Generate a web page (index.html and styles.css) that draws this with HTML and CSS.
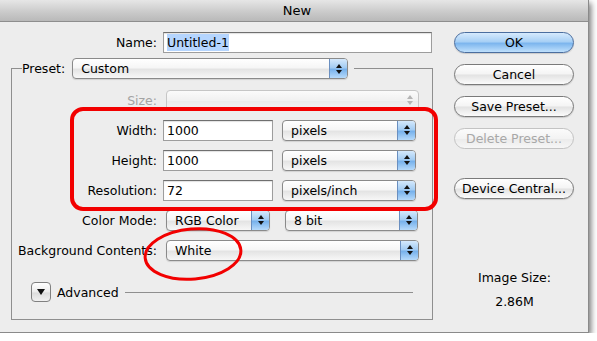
FILE: index.html
```html
<!DOCTYPE html>
<html>
<head>
<meta charset="utf-8">
<link rel="stylesheet" href="styles.css">
</head>
<body>
<div class="window">
  <div class="titlebar">New</div>
  <div class="content">
    <div class="main">
      <div class="name-row">
        <span class="lbl">Name:</span>
        <div class="field name-field"><span class="selected">Untitled-1</span></div>
      </div>
      <fieldset class="group">
        <legend class="legend">
          <span class="legend-inner">
            <span class="legend-label">Preset:</span>
            <span class="popup preset"><span class="ptext">Custom</span><span class="arrowbox"><span class="arrows"></span></span></span>
          </span>
        </legend>
        <div class="rows">
          <div class="row">
            <span class="lbl disabled">Size:</span>
            <span class="popup wide off"><span class="ptext"></span><span class="arrowbox"><span class="arrows"></span></span></span>
          </div>
          <div class="row">
            <span class="lbl">Width:</span>
            <div class="field num">1000</div>
            <span class="popup unit"><span class="ptext">pixels</span><span class="arrowbox"><span class="arrows"></span></span></span>
          </div>
          <div class="row">
            <span class="lbl">Height:</span>
            <div class="field num">1000</div>
            <span class="popup unit"><span class="ptext">pixels</span><span class="arrowbox"><span class="arrows"></span></span></span>
          </div>
          <div class="row">
            <span class="lbl">Resolution:</span>
            <div class="field num">72</div>
            <span class="popup unit"><span class="ptext">pixels/inch</span><span class="arrowbox"><span class="arrows"></span></span></span>
          </div>
          <div class="row">
            <span class="lbl">Color Mode:</span>
            <span class="popup mode"><span class="ptext">RGB Color</span><span class="arrowbox"><span class="arrows"></span></span></span>
            <span class="popup bits"><span class="ptext">8 bit</span><span class="arrowbox"><span class="arrows"></span></span></span>
          </div>
          <div class="row">
            <span class="lbl">Background Contents:</span>
            <span class="popup wide"><span class="ptext">White</span><span class="arrowbox"><span class="arrows"></span></span></span>
          </div>
          <div class="adv-row">
            <span class="disclosure"><span class="tri-down"></span></span>
            <span class="adv-text">Advanced</span>
            <span class="adv-line"></span>
          </div>
        </div>
      </fieldset>
    </div>
    <div class="side">
      <div class="btn ok">OK</div>
      <div class="btn">Cancel</div>
      <div class="btn">Save Preset...</div>
      <div class="btn dim">Delete Preset...</div>
      <div class="btn device">Device Central...</div>
      <div class="imgsize">
        <div>Image Size:</div>
        <div class="imgsize-val">2.86M</div>
      </div>
    </div>
  </div>
  <div class="mark-rect"></div>
  <svg class="mark-ellipse" width="110" height="60" viewBox="0 0 110 60">
    <ellipse cx="55" cy="30" rx="48" ry="25" fill="none" stroke="#f20000" stroke-width="3" transform="rotate(-5 55 30)"/>
  </svg>
</div>
</body>
</html>
```

FILE: styles.css
```css
html, body {
  margin: 0;
  padding: 0;
  background: #ffffff;
}

body {
  font-family: "DejaVu Sans", "Liberation Sans", sans-serif;
  font-size: 12.5px;
  color: #000;
}

.window {
  position: relative;
  width: 589px;
  height: 333px;
  box-sizing: border-box;
  background: #ededed;
  border-right: 1px solid #8a8a8a;
  border-bottom: 1px solid #8a8a8a;
  box-shadow: 2px 3px 6px rgba(0, 0, 0, 0.55);
}

.titlebar {
  height: 21px;
  line-height: 21px;
  text-align: center;
  font-size: 13px;
  background: linear-gradient(#e6e6e6, #c9c9c9 60%, #b9b9b9);
  border-bottom: 1px solid #8e8e8e;
  padding-left: 6px;
}

.content {
  display: flex;
  gap: 22px;
}

.main {
  width: 421px;
  padding-left: 11px;
}

.name-row {
  display: flex;
  align-items: center;
  margin-top: 10px;
  height: 21px;
}

.lbl {
  width: 146px;
  text-align: right;
  white-space: nowrap;
  flex: none;
}

.rows .lbl {
  width: 145px;
}

.lbl.disabled {
  color: #a3a3a3;
}

.field {
  height: 21px;
  box-sizing: border-box;
  background: #fff;
  border: 1px solid #9d9d9d;
  border-top-color: #6f6f6f;
  box-shadow: inset 0 1px 1px rgba(0, 0, 0, 0.12);
  display: flex;
  align-items: center;
  padding-left: 3px;
  margin-left: 6px;
  flex: none;
}

.name-field {
  width: 269px;
}

.selected {
  background: #b5d5fe;
  padding: 1px 0;
}

.num {
  width: 110px;
}

.group {
  margin: 5px 0 0 0;
  padding: 0;
  width: 422px;
  height: 262px;
  box-sizing: border-box;
  border: 1px solid #8f8f8f;
  min-width: 0;
}

.legend {
  padding: 0 6px 0 0;
  margin-left: 10px;
}

.legend-inner {
  display: flex;
  align-items: center;
  height: 21px;
}

.legend-label {
  margin-right: 7px;
}

.popup {
  position: relative;
  display: flex;
  align-items: center;
  height: 21px;
  box-sizing: border-box;
  border: 1px solid #8a8a8a;
  border-radius: 4px;
  background: linear-gradient(#ffffff, #f6f6f6 45%, #e4e4e4 55%, #f7f7f7);
  box-shadow: 0 1px 1px rgba(0, 0, 0, 0.12);
  overflow: hidden;
  flex: none;
}

.ptext {
  flex: 1;
  padding-left: 8px;
  white-space: nowrap;
}

.arrowbox {
  width: 17px;
  height: 100%;
  display: flex;
  align-items: center;
  justify-content: center;
  background: linear-gradient(#d5e9fc, #a3ccf3 45%, #78b2ec 55%, #b6dafb);
  border-left: 1px solid #6a8fc0;
}

.arrows {
  display: flex;
  flex-direction: column;
  gap: 2px;
}

.arrows::before,
.arrows::after {
  content: "";
  width: 0;
  height: 0;
  border-left: 3px solid transparent;
  border-right: 3px solid transparent;
}

.arrows::before {
  border-bottom: 4px solid #111;
}

.arrows::after {
  border-top: 4px solid #111;
}

.preset {
  width: 276px;
}

.row {
  display: flex;
  align-items: center;
  height: 30px;
}

.rows {
  padding-top: 6px;
}

.wide {
  width: 253px;
  margin-left: 9px;
}

.unit {
  width: 134px;
  margin-left: 9px;
}

.mode {
  width: 104px;
  margin-left: 9px;
}

.bits {
  width: 133px;
  margin-left: 15px;
}

.popup.off {
  border-color: #c6c6c6;
  background: linear-gradient(#fbfbfb, #f1f1f1 50%, #ebebeb 55%, #f3f3f3);
  box-shadow: none;
}

.popup.off .arrowbox {
  background: transparent;
  border-left: none;
}

.popup.off .arrows::before {
  border-bottom-color: #b5b5b5;
}

.popup.off .arrows::after {
  border-top-color: #b5b5b5;
}

.adv-row {
  display: flex;
  align-items: center;
  height: 24px;
  margin-top: 15px;
  padding-left: 19px;
  padding-right: 19px;
}

.disclosure {
  width: 20px;
  height: 20px;
  box-sizing: border-box;
  border: 1px solid #808080;
  border-radius: 4px;
  background: linear-gradient(#ffffff, #ececec 50%, #dcdcdc 55%, #f1f1f1);
  display: flex;
  align-items: center;
  justify-content: center;
  flex: none;
}

.tri-down {
  width: 0;
  height: 0;
  border-left: 4px solid transparent;
  border-right: 4px solid transparent;
  border-top: 6px solid #111;
}

.adv-text {
  margin-left: 6px;
}

.adv-line {
  flex: 1;
  height: 1px;
  background: #8f8f8f;
  margin-left: 6px;
}

.side {
  width: 120px;
  padding-top: 10px;
  display: flex;
  flex-direction: column;
  gap: 11px;
}

.btn {
  height: 21px;
  box-sizing: border-box;
  border: 1px solid #7a7a7a;
  border-radius: 11px;
  background: linear-gradient(#ffffff, #f4f4f4 48%, #e2e2e2 52%, #fbfbfb);
  box-shadow: 0 1px 1px rgba(0, 0, 0, 0.15);
  text-align: center;
  line-height: 19px;
  white-space: nowrap;
}

.btn.ok {
  border-color: #4b6e9f;
  background: linear-gradient(#d6eafd, #a8d0f5 45%, #7db6ee 55%, #bfe0fc);
}

.btn.dim {
  color: #a8a8a8;
  border-color: #c3c3c3;
  box-shadow: none;
  background: linear-gradient(#fbfbfb, #f3f3f3 50%, #ebebeb 52%, #f6f6f6);
}

.btn.device {
  margin-top: 18px;
}

.imgsize {
  margin-top: 60px;
  text-align: center;
  line-height: 16px;
  padding-left: 1px;
}

.imgsize-val {
  margin-top: 8px;
}

.mark-rect {
  position: absolute;
  left: 70px;
  top: 107px;
  width: 368px;
  height: 104px;
  box-sizing: border-box;
  border: 4px solid #f20000;
  border-radius: 13px;
}

.mark-ellipse {
  position: absolute;
  left: 138px;
  top: 224px;
}
```
